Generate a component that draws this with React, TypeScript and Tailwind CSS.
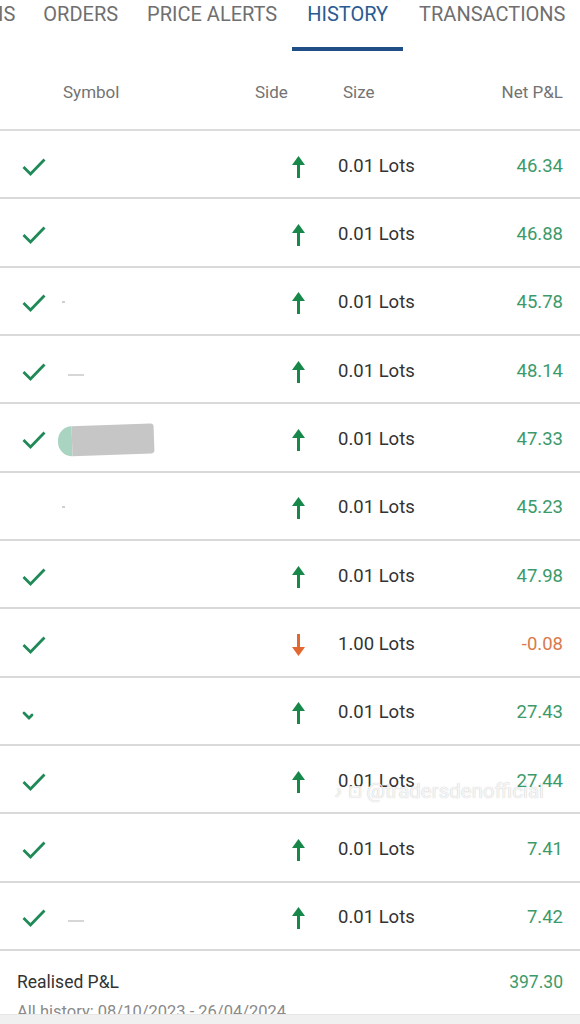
import React from "react";

type Row = {
  check: "full" | "partial" | "none";
  blob?: "gray" | "dash" | "dot" | "none";
  up: boolean;
  size: string;
  pnl: string;
};

const rows: Row[] = [
  { check: "full", blob: "none", up: true, size: "0.01 Lots", pnl: "46.34" },
  { check: "full", blob: "none", up: true, size: "0.01 Lots", pnl: "46.88" },
  { check: "full", blob: "dot", up: true, size: "0.01 Lots", pnl: "45.78" },
  { check: "full", blob: "dash", up: true, size: "0.01 Lots", pnl: "48.14" },
  { check: "full", blob: "gray", up: true, size: "0.01 Lots", pnl: "47.33" },
  { check: "none", blob: "dot", up: true, size: "0.01 Lots", pnl: "45.23" },
  { check: "full", blob: "none", up: true, size: "0.01 Lots", pnl: "47.98" },
  { check: "full", blob: "none", up: false, size: "1.00 Lots", pnl: "-0.08" },
  { check: "partial", blob: "none", up: true, size: "0.01 Lots", pnl: "27.43" },
  { check: "full", blob: "none", up: true, size: "0.01 Lots", pnl: "27.44" },
  { check: "full", blob: "none", up: true, size: "0.01 Lots", pnl: "7.41" },
  { check: "full", blob: "dash", up: true, size: "0.01 Lots", pnl: "7.42" },
];

function Check({ partial }: { partial?: boolean }) {
  if (partial) {
    return (
      <svg width="24" height="20" viewBox="0 0 24 20">
        <polyline points="2,10 7,15 10,12" fill="none" stroke="#1f8a57" strokeWidth="2.8" strokeLinecap="round" />
      </svg>
    );
  }
  return (
    <svg width="24" height="20" viewBox="0 0 24 20">
      <polyline points="1.5,10 8.5,17 22.5,2.5" fill="none" stroke="#1f8a57" strokeWidth="2.8" strokeLinejoin="miter" />
    </svg>
  );
}

function Arrow({ up }: { up: boolean }) {
  const c = up ? "#17874a" : "#e2682f";
  return (
    <svg width="13" height="22" viewBox="0 0 13 22">
      {up ? (
        <>
          <polygon points="0,9 6.5,0 13,9" fill={c} />
          <rect x="5" y="8" width="3" height="14" fill={c} />
        </>
      ) : (
        <>
          <polygon points="0,13 6.5,22 13,13" fill={c} />
          <rect x="5" y="0" width="3" height="14" fill={c} />
        </>
      )}
    </svg>
  );
}

function Blob({ kind }: { kind?: Row["blob"] }) {
  if (kind === "gray") {
    return (
      <div className="ml-[12px] flex h-[30px] w-[96px] items-stretch -rotate-[2deg]">
        <div className="w-[14px] rounded-l-full bg-[#a9d4c1]" />
        <div className="flex-1 rounded-r-[3px] bg-[#c6c6c6]" />
      </div>
    );
  }
  if (kind === "dash") {
    return <div className="ml-[22px] mt-[6px] h-[2px] w-[16px] bg-[#d6d6d6]" />;
  }
  if (kind === "dot") {
    return <div className="ml-[16px] mt-[-2px] h-[2px] w-[3px] bg-[#cfcfcf]" />;
  }
  return null;
}

export default function App() {
  return (
    <div
      className="w-[580px] h-[1024px] overflow-hidden bg-white flex flex-col"
      style={{ fontFamily: "Roboto, 'Noto Sans', Arial, sans-serif" }}
    >
      {/* Tabs */}
      <div className="flex h-[52px] shrink-0 items-start text-[20px] text-[#6f6f6f] whitespace-nowrap">
        <div className="ml-[-2px] pt-[2px] leading-[24px]">IS</div>
        <div className="ml-[28px] pt-[2px] leading-[24px]">ORDERS</div>
        <div className="ml-[29px] pt-[2px] leading-[24px]">PRICE ALERTS</div>
        <div className="ml-[15px] flex h-[51px] flex-col border-b-[4px] border-[#1f4f86] px-[15px] pt-[2px] leading-[24px] text-[#2a5b90]">
          HISTORY
        </div>
        <div className="ml-[16px] pt-[2px] leading-[24px]">TRANSACTIONS</div>
      </div>

      {/* Header */}
      <div className="flex h-[79px] shrink-0 items-center border-b-2 border-[#dcdcdc] text-[17px] text-[#737373]">
        <div className="w-[255px] pl-[63px] pt-[4px]">Symbol</div>
        <div className="w-[88px] pt-[4px]">Side</div>
        <div className="w-[60px] pt-[4px]">Size</div>
        <div className="flex-1 pr-[17px] pt-[4px] text-right">Net P&amp;L</div>
      </div>

      {/* Rows */}
      {rows.map((r, i) => (
        <div
          key={i}
          className="relative flex h-[68.33px] shrink-0 items-center border-b-2 border-[#d9d9d9] pt-[5px]"
        >
          <div className="flex w-[292px] items-center pl-[22px]">
            <div className="w-[24px] h-[20px]">
              {r.check === "full" && <Check />}
              {r.check === "partial" && <Check partial />}
            </div>
            <Blob kind={r.blob} />
          </div>
          <div className="w-[13px] flex items-center">
            <Arrow up={r.up} />
          </div>
          <div className="ml-[33px] text-[18.5px] text-[#333333]">{r.size}</div>
          <div
            className={
              "flex-1 pr-[17px] text-right text-[18.5px] " +
              (r.up ? "text-[#3c9a6a]" : "text-[#d97a4c]")
            }
          >
            {r.pnl}
          </div>
          {i === 9 && (
            <div className="absolute left-[334px] top-[30px] flex items-center gap-[5px] text-[20.5px] text-white/85 [text-shadow:0_0_1px_rgba(0,0,0,0.3)]">
              <span className="text-[17px]">♪</span>
              <span className="text-[17px]">⊡</span>
              <span>@tradersdenofficial</span>
            </div>
          )}
        </div>
      ))}

      {/* Footer */}
      <div className="h-[63px] shrink-0 overflow-hidden px-[17px]">
        <div className="flex items-center justify-between pt-[20px] text-[17.5px] leading-[22px]">
          <span className="text-[#333333]">Realised P&amp;L</span>
          <span className="text-[#3c9a6a]">397.30</span>
        </div>
        <div className="mt-[9px] text-[16.5px] leading-[20px] text-[#8a8a8a] whitespace-nowrap">
          All history: 08/10/2023 - 26/04/2024
        </div>
      </div>
      <div className="flex-1 bg-[#f0f0f0] border-t border-[#e6e6e6]" />
    </div>
  );
}
